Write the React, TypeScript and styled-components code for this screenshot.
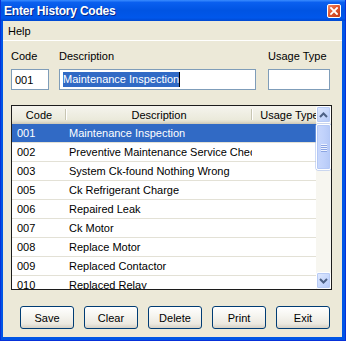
import React from "react"
import styled, { createGlobalStyle } from "styled-components"

const GlobalStyle = createGlobalStyle`
  html, body {
    margin: 0;
    padding: 0;
    background: #ece9d8;
  }
  body {
    font-family: "Liberation Sans", Arial, sans-serif;
    font-size: 11px;
    color: #000;
  }
`

const rows = [
  { code: "001", desc: "Maintenance Inspection" },
  { code: "002", desc: "Preventive Maintenance Service Checkup" },
  { code: "003", desc: "System Ck-found Nothing Wrong" },
  { code: "005", desc: "Ck Refrigerant Charge" },
  { code: "006", desc: "Repaired Leak" },
  { code: "007", desc: "Ck Motor" },
  { code: "008", desc: "Replace Motor" },
  { code: "009", desc: "Replaced Contactor" },
  { code: "010", desc: "Replaced Relay" },
]

const buttons = ["Save", "Clear", "Delete", "Print", "Exit"]

const App: React.FC = () => (
  <>
    <GlobalStyle />
    <Window>
      <TitleBar>
        <Title>Enter History Codes</Title>
        <CloseButton>
          <svg width="8" height="8" viewBox="0 0 8 8">
            <path d="M1 1 L7 7 M7 1 L1 7" stroke="#fff" strokeWidth="1.8" strokeLinecap="square" />
          </svg>
        </CloseButton>
      </TitleBar>

      <Body>
        <MenuBar>
          <MenuItem>Help</MenuItem>
        </MenuBar>

        <Content>
          <FieldRow>
            <Field $width={38}>
              <Label>Code</Label>
              <TextBox>001</TextBox>
            </Field>
            <Field $width={197}>
              <Label>Description</Label>
              <TextBox>
                <Selected>Maintenance Inspection</Selected>
                <Caret />
              </TextBox>
            </Field>
            <Field $width={62} $offset={2}>
              <Label>Usage Type</Label>
              <TextBox />
            </Field>
          </FieldRow>

          <ListView>
            <ListMain>
              <Header>
                <HeadCell $width={54}>Code</HeadCell>
                <HeadCell $width={186}>Description</HeadCell>
                <HeadCell $width={75} $last>Usage Type</HeadCell>
              </Header>
              {rows.map((r, i) => (
                <Row key={r.code} $selected={i === 0}>
                  <Cell $width={54} $pad={5}>{r.code}</Cell>
                  <Cell $width={186} $pad={3}>{r.desc}</Cell>
                </Row>
              ))}
            </ListMain>

            <ScrollBar>
              <ScrollButton>
                <svg width="9" height="6" viewBox="0 0 9 6">
                  <path d="M1 5 L4.5 1.5 L8 5" fill="none" stroke="#4d6185" strokeWidth="2" />
                </svg>
              </ScrollButton>
              <Track>
                <Thumb>
                  <Grip />
                  <Grip />
                  <Grip />
                  <Grip />
                </Thumb>
              </Track>
              <ScrollButton>
                <svg width="9" height="6" viewBox="0 0 9 6">
                  <path d="M1 1 L4.5 4.5 L8 1" fill="none" stroke="#4d6185" strokeWidth="2" />
                </svg>
              </ScrollButton>
            </ScrollBar>
          </ListView>

          <ButtonRow>
            {buttons.map((b) => (
              <Button key={b}>{b}</Button>
            ))}
          </ButtonRow>
        </Content>
      </Body>
    </Window>
  </>
)

export default App

const Window = styled.div`
  width: 346px;
  height: 341px;
  box-sizing: border-box;
  display: flex;
  flex-direction: column;
  background: #0055e5;
  border-left: 1px solid #0831d9;
  border-right: 1px solid #0831d9;
  border-bottom: 1px solid #0831d9;
`

const TitleBar = styled.div`
  height: 21px;
  flex: 0 0 21px;
  display: flex;
  align-items: center;
  justify-content: space-between;
  padding: 0 4px 0 3px;
  background: linear-gradient(
    to bottom,
    #3a8cff 0%,
    #0a5fef 12%,
    #0054e3 50%,
    #0057eb 85%,
    #0048d0 100%
  );
`

const Title = styled.div`
  color: #fff;
  font-weight: bold;
  font-size: 12px;
  letter-spacing: -0.2px;
  text-shadow: 1px 1px 0 #0a2a8a;
`

const CloseButton = styled.div`
  width: 12px;
  height: 12px;
  display: flex;
  align-items: center;
  justify-content: center;
  border: 1px solid #fff;
  border-radius: 2px;
  background: linear-gradient(to bottom right, #f08a68 0%, #e2572f 45%, #c23b18 100%);
`

const Body = styled.div`
  flex: 1;
  margin: 0 3px 3px 2px;
  background: #ece9d8;
  display: flex;
  flex-direction: column;
`

const MenuBar = styled.div`
  height: 19px;
  display: flex;
  align-items: center;
  border-bottom: 1px solid #fff;
`

const MenuItem = styled.span`
  padding-left: 5px;
  font-size: 11px;
`

const Content = styled.div`
  display: flex;
  flex-direction: column;
  padding: 9px 10px 0 8px;
`

const FieldRow = styled.div`
  display: flex;
  gap: 10px;
`

const Field = styled.div<{ $width: number; $offset?: number }>`
  flex: 0 0 ${(p) => p.$width}px;
  width: ${(p) => p.$width}px;
  margin-left: ${(p) => p.$offset ?? 0}px;
  display: flex;
  flex-direction: column;
  gap: 6px;
`

const Label = styled.div`
  height: 13px;
  line-height: 13px;
  font-size: 11px;
  white-space: nowrap;
`

const TextBox = styled.div`
  height: 21px;
  box-sizing: border-box;
  border: 1px solid #7f9db9;
  background: #fff;
  display: flex;
  align-items: center;
  padding-left: 3px;
  white-space: nowrap;
  overflow: hidden;
`

const Selected = styled.span`
  background: #316ac5;
  color: #fff;
  line-height: 15px;
`

const Caret = styled.span`
  width: 1px;
  height: 15px;
  background: #000;
`

const ListView = styled.div`
  margin-top: 15px;
  width: 321px;
  height: 185px;
  box-sizing: border-box;
  border: 1px solid #1c1c1c;
  background: #fff;
  display: flex;
  overflow: hidden;
`

const ListMain = styled.div`
  flex: 1;
  min-width: 0;
  overflow: hidden;
`

const Header = styled.div`
  height: 18px;
  display: flex;
  background: linear-gradient(to bottom, #f5f4ee 0%, #ebeadb 75%, #e2decd 86%, #d6d2c2 93%, #cbc7b8 100%);
  white-space: nowrap;
  overflow: hidden;
`

const HeadCell = styled.div<{ $width: number; $last?: boolean }>`
  flex: 0 0 ${(p) => p.$width}px;
  box-sizing: border-box;
  text-align: center;
  line-height: 18px;
  position: relative;
  ${(p) =>
    !p.$last &&
    `&::after {
      content: "";
      position: absolute;
      right: 0;
      top: 3px;
      bottom: 4px;
      width: 1px;
      background: #c7c5b2;
      box-shadow: 1px 0 0 #fff;
    }`}
`

const Row = styled.div<{ $selected?: boolean }>`
  height: 19px;
  box-sizing: border-box;
  display: flex;
  align-items: center;
  border-bottom: 1px solid #e3e1d6;
  background: ${(p) => (p.$selected ? "#316ac5" : "#fff")};
  color: ${(p) => (p.$selected ? "#fff" : "#000")};
`

const Cell = styled.div<{ $width: number; $pad: number }>`
  flex: 0 0 ${(p) => p.$width}px;
  box-sizing: border-box;
  padding-left: ${(p) => p.$pad}px;
  white-space: nowrap;
  overflow: hidden;
`

const ScrollBar = styled.div`
  flex: 0 0 15px;
  display: flex;
  flex-direction: column;
  background: #f7f6f0;
`

const ScrollButton = styled.div`
  height: 17px;
  flex: 0 0 17px;
  box-sizing: border-box;
  display: flex;
  align-items: center;
  justify-content: center;
  border: 1px solid #fff;
  border-radius: 2px;
  box-shadow: inset 0 0 0 1px #b8cbf5;
  background: linear-gradient(to bottom right, #e1eafe 0%, #c5d6fc 60%, #b4c8f6 100%);
`

const Track = styled.div`
  flex: 1;
  padding-top: 1px;
`

const Thumb = styled.div`
  height: 46px;
  box-sizing: border-box;
  border: 1px solid #fff;
  border-radius: 2px;
  box-shadow: inset 0 0 0 1px #b4c8f6, 0 0 0 0.5px #9eb5ee;
  background: linear-gradient(to right, #c9d8fc 0%, #c1d2fb 50%, #b5c9f7 100%);
  display: flex;
  flex-direction: column;
  align-items: center;
  justify-content: center;
  gap: 1px;
`

const Grip = styled.div`
  width: 6px;
  height: 1px;
  background: #eef3fe;
  box-shadow: 0 1px 0 #8ca5e3;
`

const ButtonRow = styled.div`
  margin-top: 16px;
  padding-left: 9px;
  display: flex;
  gap: 10px;
`

const Button = styled.div`
  width: 54px;
  height: 23px;
  box-sizing: border-box;
  border: 1px solid #003c74;
  border-radius: 3px;
  display: flex;
  align-items: center;
  justify-content: center;
  background: linear-gradient(to bottom, #ffffff 0%, #f6f5f0 40%, #ece9e0 80%, #d6d0c5 100%);
  font-size: 11px;
`
